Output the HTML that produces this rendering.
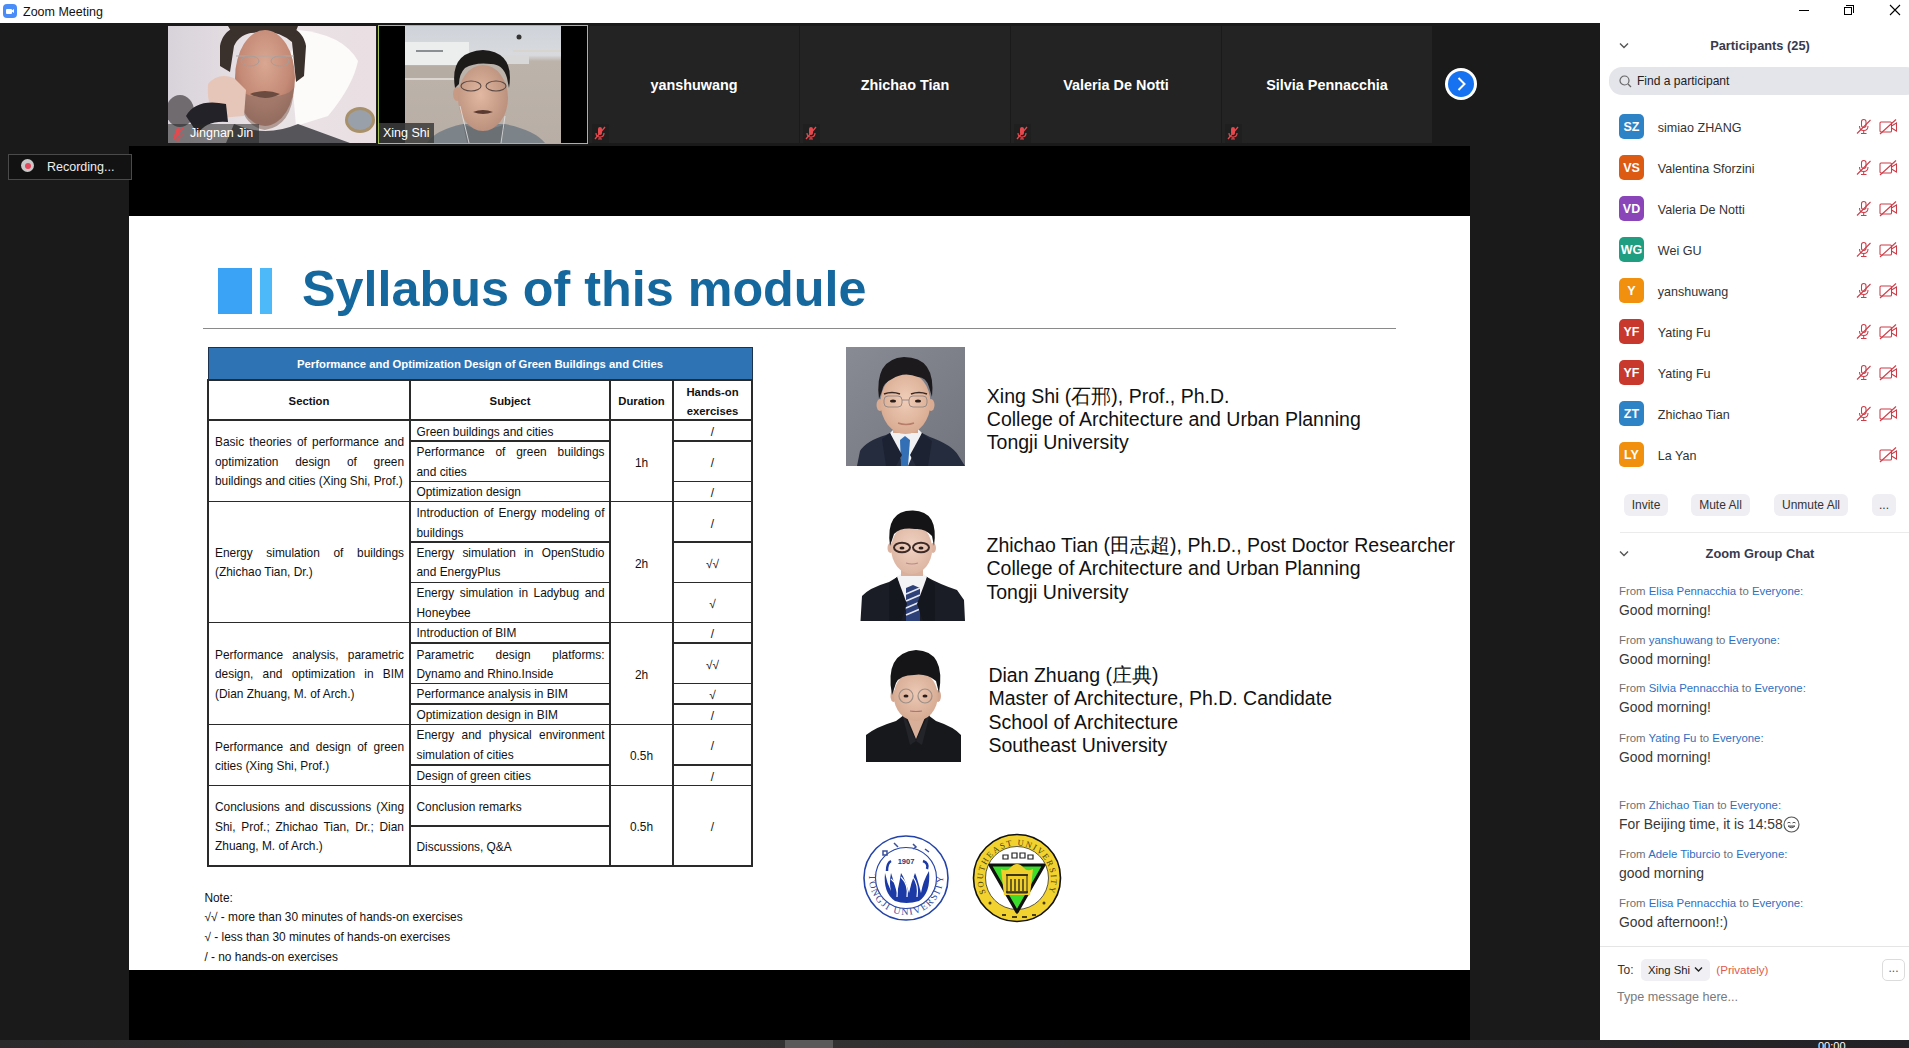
<!DOCTYPE html>
<html><head><meta charset="utf-8">
<style>
*{margin:0;padding:0;box-sizing:border-box}
html,body{width:1909px;height:1048px;overflow:hidden;background:#1a1a1a;font-family:"Liberation Sans",sans-serif}
.a{position:absolute}
#title{left:0;top:0;width:1909px;height:23px;background:#fff}
.tile{top:26px;height:117px;background:#232323}
</style></head><body>
<!-- title bar -->
<div class="a" id="title">
  <div class="a" style="left:3px;top:4px;width:14px;height:14px;border-radius:4px;background:#4b8df8"></div>
  <div class="a" style="left:6px;top:8.5px;width:6px;height:5px;background:#fff;border-radius:1px"></div>
  <div class="a" style="left:11px;top:8.5px;width:0;height:0;border-top:2.5px solid transparent;border-bottom:2.5px solid transparent;border-right:3px solid #fff"></div>
  <div class="a" style="left:23px;top:4.3px;font-size:12.5px;color:#111;line-height:16px">Zoom Meeting</div>
  <div class="a" style="left:1799px;top:10px;width:10px;height:1px;background:#000"></div>
  <div class="a" style="left:1844px;top:7px;width:8px;height:8px;border:1px solid #000;background:#fff"></div>
  <div class="a" style="left:1846px;top:5px;width:8px;height:8px;border-top:1px solid #000;border-right:1px solid #000"></div>
  <svg class="a" style="left:1889px;top:4px" width="12" height="12" viewBox="0 0 12 12"><path d="M1 1L11 11M11 1L1 11" stroke="#000" stroke-width="1.1"/></svg>
</div>
<!-- video strip -->
<div class="a" style="left:168px;top:26px;width:208px;height:117px;overflow:hidden;background:#e6dde1">
 <svg width="208" height="117" viewBox="0 0 208 117">
  <defs><linearGradient id="g1" x1="0" x2="1"><stop offset="0" stop-color="#d8d2da"/><stop offset="0.45" stop-color="#e9e3e6"/><stop offset="1" stop-color="#eadfe3"/></linearGradient>
  <radialGradient id="fc" cx="0.5" cy="0.35" r="0.6"><stop offset="0" stop-color="#d9a792"/><stop offset="0.7" stop-color="#c48a76"/><stop offset="1" stop-color="#a87262"/></radialGradient></defs>
  <rect width="208" height="117" fill="url(#g1)"/>
  <path d="M130 4 Q175 8 190 35 Q185 60 160 90 L128 100 L122 30Z" fill="#fdfafa"/>
  <ellipse cx="12" cy="85" rx="14" ry="16" fill="#6f6b6f"/>
  <ellipse cx="192" cy="94" rx="15" ry="13" fill="#a8916a"/>
  <ellipse cx="192" cy="94" rx="12" ry="10" fill="#9aa0aa"/>
  <path d="M52 20 Q56 -4 95 -4 Q134 -4 138 20 L136 50 L128 56 L124 16 Q110 4 92 6 Q72 6 66 20 L62 46 L52 40Z" fill="#3a302c"/>
  <path d="M60 0 H130 L126 10 Q96 2 66 10Z" fill="#3a302c"/>
  <ellipse cx="97" cy="52" rx="30" ry="48" fill="url(#fc)"/>
  <path d="M70 62 Q72 100 97 104 Q124 100 126 62 Q118 72 97 70 Q78 72 70 62Z" fill="#8a6d60" opacity="0.6"/>
  <path d="M82 68 Q97 62 112 68 Q97 76 82 68Z" fill="#6b4a40"/>
  <path d="M68 30 H126" stroke="#b0a8a6" stroke-width="1"/>
  <ellipse cx="82" cy="35" rx="9" ry="5" fill="none" stroke="#a89c98" stroke-width="1"/>
  <ellipse cx="112" cy="35" rx="9" ry="5" fill="none" stroke="#a89c98" stroke-width="1"/>
  <path d="M40 58 Q50 46 66 52 L78 64 L76 90 L50 92 Q38 80 40 58Z" fill="#e6c6b8"/>
  <path d="M18 90 Q28 72 58 78 L60 96 Q38 94 30 108Z" fill="#222228"/>
  <path d="M58 117 L66 98 Q97 112 130 98 L182 117Z" fill="#55555a"/>
 </svg>
 <div class="a" style="left:0;top:98px;width:91px;height:19px;background:rgba(40,40,40,0.55)"></div>
 <svg class="a" style="left:3px;top:101px" width="14" height="14" viewBox="0 0 14 14"><rect x="5" y="1" width="4" height="8" rx="2" fill="#e5484d"/><path d="M3 7Q3 11 7 11Q11 11 11 7M7 11V13M5 13H9" stroke="#e5484d" fill="none" stroke-width="1.2"/><path d="M2 13L12 1" stroke="#e5484d" stroke-width="1.3"/></svg>
 <div class="a" style="left:22px;top:99px;font-size:12.5px;color:#fff;line-height:17px">Jingnan Jin</div>
</div>
<div class="a" style="left:378px;top:25px;width:210px;height:119px;border:1px solid #a4c458;background:#000;overflow:hidden">
 <svg class="a" style="left:26px;top:0" width="156" height="117" viewBox="0 0 156 117">
  <defs><linearGradient id="wl" x1="0" x2="0" y1="0" y2="1"><stop offset="0" stop-color="#cfd3da"/><stop offset="0.25" stop-color="#d8dadd"/><stop offset="0.3" stop-color="#bcb3ab"/><stop offset="1" stop-color="#b8aea6"/></linearGradient>
  <radialGradient id="sk4" cx="0.45" cy="0.45" r="0.6"><stop offset="0" stop-color="#e2b8a2"/><stop offset="1" stop-color="#b98e7a"/></radialGradient></defs>
  <rect width="156" height="117" fill="url(#wl)"/>
  <rect x="0" y="16" width="64" height="23" fill="#eceeee"/>
  <rect x="11" y="24" width="27" height="2" fill="#8c8f92"/>
  <rect x="0" y="40" width="54" height="13" fill="#b5aca4"/>
  <rect x="0" y="52" width="54" height="2" fill="#dcd6d0"/>
  <rect x="108" y="24" width="48" height="2" fill="#d8d4d0"/>
  <rect x="96" y="30" width="28" height="8" fill="#d8d8d8"/>
  <circle cx="114" cy="11" r="2.5" fill="#333"/>
  <path d="M22 117 Q30 104 58 98 L100 98 Q130 104 140 117Z" fill="#7d8489"/>
  <path d="M58 98 Q78 108 100 98 L96 117 L62 117Z" fill="#6b7075"/>
  <ellipse cx="52" cy="68" rx="4" ry="7" fill="#c79a84"/>
  <ellipse cx="78" cy="72" rx="25" ry="33" fill="url(#sk4)"/>
  <path d="M50 62 Q44 26 78 24 Q110 26 104 62 L102 52 Q98 38 86 38 Q70 36 60 42 Q54 48 54 58Z" fill="#1d1a1a"/>
  <ellipse cx="66" cy="60" rx="10" ry="5" fill="none" stroke="#5a4a44" stroke-width="1.1"/>
  <ellipse cx="91" cy="60" rx="10" ry="5" fill="none" stroke="#5a4a44" stroke-width="1.1"/>
  <path d="M68 86 Q78 82 88 86 Q78 90 68 86Z" fill="#5a3a30"/>
  <path d="M55 80 Q60 100 64 117 M100 90 Q98 104 96 117" stroke="#e6e6e6" stroke-width="0.8" fill="none"/>
 </svg>
 <div class="a" style="left:0;top:97px;width:55px;height:20px;background:rgba(60,60,60,0.85)"></div>
 <div class="a" style="left:4px;top:99px;font-size:12.5px;color:#fff;line-height:17px">Xing Shi</div>
</div>
<div class="a tile" style="left:589px;width:210px">
 <div class="a" style="left:0;top:0;width:210px;top:50.5px;text-align:center;font-size:14.4px;font-weight:bold;color:#fff;line-height:17px">yanshuwang</div>
 <div class="a" style="left:3px;top:98px;width:17px;height:19px;background:#1f1f1f"></div>
 <svg class="a" style="left:4px;top:100px" width="14" height="14" viewBox="0 0 14 14"><rect x="5" y="1" width="4" height="8" rx="2" fill="#e5484d"/><path d="M3 7Q3 11 7 11Q11 11 11 7M7 11V13M5 13H9" stroke="#e5484d" fill="none" stroke-width="1.2"/><path d="M2 13L12 1" stroke="#e5484d" stroke-width="1.3"/></svg>
</div>
<div class="a tile" style="left:800px;width:210px">
 <div class="a" style="left:0;top:0;width:210px;top:50.5px;text-align:center;font-size:14.4px;font-weight:bold;color:#fff;line-height:17px">Zhichao Tian</div>
 <div class="a" style="left:3px;top:98px;width:17px;height:19px;background:#1f1f1f"></div>
 <svg class="a" style="left:4px;top:100px" width="14" height="14" viewBox="0 0 14 14"><rect x="5" y="1" width="4" height="8" rx="2" fill="#e5484d"/><path d="M3 7Q3 11 7 11Q11 11 11 7M7 11V13M5 13H9" stroke="#e5484d" fill="none" stroke-width="1.2"/><path d="M2 13L12 1" stroke="#e5484d" stroke-width="1.3"/></svg>
</div>
<div class="a tile" style="left:1011px;width:210px">
 <div class="a" style="left:0;top:0;width:210px;top:50.5px;text-align:center;font-size:14.4px;font-weight:bold;color:#fff;line-height:17px">Valeria De Notti</div>
 <div class="a" style="left:3px;top:98px;width:17px;height:19px;background:#1f1f1f"></div>
 <svg class="a" style="left:4px;top:100px" width="14" height="14" viewBox="0 0 14 14"><rect x="5" y="1" width="4" height="8" rx="2" fill="#e5484d"/><path d="M3 7Q3 11 7 11Q11 11 11 7M7 11V13M5 13H9" stroke="#e5484d" fill="none" stroke-width="1.2"/><path d="M2 13L12 1" stroke="#e5484d" stroke-width="1.3"/></svg>
</div>
<div class="a tile" style="left:1222px;width:210px">
 <div class="a" style="left:0;top:0;width:210px;top:50.5px;text-align:center;font-size:14.4px;font-weight:bold;color:#fff;line-height:17px">Silvia Pennacchia</div>
 <div class="a" style="left:3px;top:98px;width:17px;height:19px;background:#1f1f1f"></div>
 <svg class="a" style="left:4px;top:100px" width="14" height="14" viewBox="0 0 14 14"><rect x="5" y="1" width="4" height="8" rx="2" fill="#e5484d"/><path d="M3 7Q3 11 7 11Q11 11 11 7M7 11V13M5 13H9" stroke="#e5484d" fill="none" stroke-width="1.2"/><path d="M2 13L12 1" stroke="#e5484d" stroke-width="1.3"/></svg>
</div>
<div class="a" style="left:1445px;top:68px;width:32px;height:32px;border-radius:50%;background:#fff"></div>
<div class="a" style="left:1448px;top:71px;width:26px;height:26px;border-radius:50%;background:#1672f0"></div>
<svg class="a" style="left:1448px;top:71px" width="27" height="27" viewBox="0 0 27 27"><path d="M10.5 7L16.5 13L10.5 19" stroke="#fff" stroke-width="2" fill="none"/></svg>
<div class="a" style="left:129px;top:146px;width:1341px;height:894px;background:#000;"></div>
<div class="a" style="left:129px;top:216px;width:1341px;height:754px;background:#fff;"></div>
<div class="a" style="left:218px;top:268px;width:34px;height:46px;background:#3aa3f6;"></div>
<div class="a" style="left:260px;top:268px;width:12px;height:46px;background:#4db9f8;"></div>
<div class="a" style="left:302.0px;top:258.9px;font-size:50.3px;line-height:60px;color:#15689e;white-space:nowrap;font-weight:bold;">Syllabus of this module</div>
<div class="a" style="left:203px;top:327.8px;width:1193px;height:1.5px;background:#8a8a8a;"></div>
<div class="a" style="left:208px;top:347px;width:545px;height:33px;background:#2e74b5;border:1.3px solid #1b3350"></div>
<div class="a" style="left:207.25px;top:379px;width:1.5px;height:488px;background:#2a2a2a;"></div>
<div class="a" style="left:751.25px;top:379px;width:1.5px;height:488px;background:#2a2a2a;"></div>
<div class="a" style="left:409.25px;top:379px;width:1.5px;height:488px;background:#2a2a2a;"></div>
<div class="a" style="left:609.25px;top:379px;width:1.5px;height:488px;background:#2a2a2a;"></div>
<div class="a" style="left:672.25px;top:379px;width:1.5px;height:488px;background:#2a2a2a;"></div>
<div class="a" style="left:207px;top:419.25px;width:546px;height:1.5px;background:#2a2a2a;"></div>
<div class="a" style="left:207px;top:500.85px;width:546px;height:1.5px;background:#2a2a2a;"></div>
<div class="a" style="left:207px;top:621.85px;width:546px;height:1.5px;background:#2a2a2a;"></div>
<div class="a" style="left:207px;top:723.65px;width:546px;height:1.5px;background:#2a2a2a;"></div>
<div class="a" style="left:207px;top:784.65px;width:546px;height:1.5px;background:#2a2a2a;"></div>
<div class="a" style="left:207px;top:865.25px;width:546px;height:1.5px;background:#2a2a2a;"></div>
<div class="a" style="left:207px;top:379.25px;width:546px;height:1.5px;background:#2a2a2a;"></div>
<div class="a" style="left:409px;top:440.25px;width:202px;height:1.5px;background:#2a2a2a;"></div>
<div class="a" style="left:672px;top:440.25px;width:81px;height:1.5px;background:#2a2a2a;"></div>
<div class="a" style="left:409px;top:480.65px;width:202px;height:1.5px;background:#2a2a2a;"></div>
<div class="a" style="left:672px;top:480.65px;width:81px;height:1.5px;background:#2a2a2a;"></div>
<div class="a" style="left:409px;top:541.05px;width:202px;height:1.5px;background:#2a2a2a;"></div>
<div class="a" style="left:672px;top:541.05px;width:81px;height:1.5px;background:#2a2a2a;"></div>
<div class="a" style="left:409px;top:581.55px;width:202px;height:1.5px;background:#2a2a2a;"></div>
<div class="a" style="left:672px;top:581.55px;width:81px;height:1.5px;background:#2a2a2a;"></div>
<div class="a" style="left:409px;top:642.35px;width:202px;height:1.5px;background:#2a2a2a;"></div>
<div class="a" style="left:672px;top:642.35px;width:81px;height:1.5px;background:#2a2a2a;"></div>
<div class="a" style="left:409px;top:682.55px;width:202px;height:1.5px;background:#2a2a2a;"></div>
<div class="a" style="left:672px;top:682.55px;width:81px;height:1.5px;background:#2a2a2a;"></div>
<div class="a" style="left:409px;top:703.15px;width:202px;height:1.5px;background:#2a2a2a;"></div>
<div class="a" style="left:672px;top:703.15px;width:81px;height:1.5px;background:#2a2a2a;"></div>
<div class="a" style="left:409px;top:764.15px;width:202px;height:1.5px;background:#2a2a2a;"></div>
<div class="a" style="left:672px;top:764.15px;width:81px;height:1.5px;background:#2a2a2a;"></div>
<div class="a" style="left:409px;top:825.45px;width:202px;height:1.5px;background:#2a2a2a;"></div>
<div class="a" style="left:208.0px;top:355.7px;font-size:11.3px;line-height:16px;color:#fff;white-space:nowrap;font-weight:bold;width:544px;text-align:center;">Performance and Optimization Design of Green Buildings and Cities</div>
<div class="a" style="left:208.0px;top:393.1px;font-size:11.3px;line-height:16px;color:#111;white-space:nowrap;font-weight:bold;width:202px;text-align:center;">Section</div>
<div class="a" style="left:410.0px;top:393.1px;font-size:11.3px;line-height:16px;color:#111;white-space:nowrap;font-weight:bold;width:200px;text-align:center;">Subject</div>
<div class="a" style="left:610.0px;top:393.1px;font-size:11.3px;line-height:16px;color:#111;white-space:nowrap;font-weight:bold;width:63px;text-align:center;">Duration</div>
<div class="a" style="left:673.0px;top:383.8px;font-size:11.3px;line-height:16px;color:#111;white-space:nowrap;font-weight:bold;width:79px;text-align:center;">Hands-on</div>
<div class="a" style="left:673.0px;top:402.9px;font-size:11.3px;line-height:16px;color:#111;white-space:nowrap;font-weight:bold;width:79px;text-align:center;">exercises</div>
<div class="a" style="left:215px;top:433.0px;width:189px;font-size:11.9px;line-height:19.5px;color:#111;text-align:justify;text-align-last:justify;white-space:nowrap;">Basic theories of performance and</div>
<div class="a" style="left:215px;top:452.5px;width:189px;font-size:11.9px;line-height:19.5px;color:#111;text-align:justify;text-align-last:justify;white-space:nowrap;">optimization design of green</div>
<div class="a" style="left:215.0px;top:472.0px;font-size:11.9px;line-height:19.5px;color:#111;white-space:nowrap;">buildings and cities (Xing Shi, Prof.)</div>
<div class="a" style="left:215px;top:543.9px;width:189px;font-size:11.9px;line-height:19.5px;color:#111;text-align:justify;text-align-last:justify;white-space:nowrap;">Energy simulation of buildings</div>
<div class="a" style="left:215.0px;top:563.4px;font-size:11.9px;line-height:19.5px;color:#111;white-space:nowrap;">(Zhichao Tian, Dr.)</div>
<div class="a" style="left:215px;top:645.8px;width:189px;font-size:11.9px;line-height:19.5px;color:#111;text-align:justify;text-align-last:justify;white-space:nowrap;">Performance analysis, parametric</div>
<div class="a" style="left:215px;top:665.3px;width:189px;font-size:11.9px;line-height:19.5px;color:#111;text-align:justify;text-align-last:justify;white-space:nowrap;">design, and optimization in BIM</div>
<div class="a" style="left:215.0px;top:684.8px;font-size:11.9px;line-height:19.5px;color:#111;white-space:nowrap;">(Dian Zhuang, M. of Arch.)</div>
<div class="a" style="left:215px;top:737.6px;width:189px;font-size:11.9px;line-height:19.5px;color:#111;text-align:justify;text-align-last:justify;white-space:nowrap;">Performance and design of green</div>
<div class="a" style="left:215.0px;top:757.1px;font-size:11.9px;line-height:19.5px;color:#111;white-space:nowrap;">cities (Xing Shi, Prof.)</div>
<div class="a" style="left:215px;top:798.4px;width:189px;font-size:11.9px;line-height:19.5px;color:#111;text-align:justify;text-align-last:justify;white-space:nowrap;">Conclusions and discussions (Xing</div>
<div class="a" style="left:215px;top:817.9px;width:189px;font-size:11.9px;line-height:19.5px;color:#111;text-align:justify;text-align-last:justify;white-space:nowrap;">Shi, Prof.; Zhichao Tian, Dr.; Dian</div>
<div class="a" style="left:215.0px;top:837.4px;font-size:11.9px;line-height:19.5px;color:#111;white-space:nowrap;">Zhuang, M. of Arch.)</div>
<div class="a" style="left:416.5px;top:422.6px;font-size:11.9px;line-height:19.5px;color:#111;white-space:nowrap;">Green buildings and cities</div>
<div class="a" style="left:416.5px;top:443.2px;width:188px;font-size:11.9px;line-height:19.5px;color:#111;text-align:justify;text-align-last:justify;white-space:nowrap;">Performance of green buildings</div>
<div class="a" style="left:416.5px;top:462.7px;font-size:11.9px;line-height:19.5px;color:#111;white-space:nowrap;">and cities</div>
<div class="a" style="left:416.5px;top:482.9px;font-size:11.9px;line-height:19.5px;color:#111;white-space:nowrap;">Optimization design</div>
<div class="a" style="left:416.5px;top:504.0px;width:188px;font-size:11.9px;line-height:19.5px;color:#111;text-align:justify;text-align-last:justify;white-space:nowrap;">Introduction of Energy modeling of</div>
<div class="a" style="left:416.5px;top:523.5px;font-size:11.9px;line-height:19.5px;color:#111;white-space:nowrap;">buildings</div>
<div class="a" style="left:416.5px;top:543.9px;width:188px;font-size:11.9px;line-height:19.5px;color:#111;text-align:justify;text-align-last:justify;white-space:nowrap;">Energy simulation in OpenStudio</div>
<div class="a" style="left:416.5px;top:563.4px;font-size:11.9px;line-height:19.5px;color:#111;white-space:nowrap;">and EnergyPlus</div>
<div class="a" style="left:416.5px;top:584.1px;width:188px;font-size:11.9px;line-height:19.5px;color:#111;text-align:justify;text-align-last:justify;white-space:nowrap;">Energy simulation in Ladybug and</div>
<div class="a" style="left:416.5px;top:603.6px;font-size:11.9px;line-height:19.5px;color:#111;white-space:nowrap;">Honeybee</div>
<div class="a" style="left:416.5px;top:624.4px;font-size:11.9px;line-height:19.5px;color:#111;white-space:nowrap;">Introduction of BIM</div>
<div class="a" style="left:416.5px;top:645.8px;width:188px;font-size:11.9px;line-height:19.5px;color:#111;text-align:justify;text-align-last:justify;white-space:nowrap;">Parametric design platforms:</div>
<div class="a" style="left:416.5px;top:665.3px;font-size:11.9px;line-height:19.5px;color:#111;white-space:nowrap;">Dynamo and Rhino.Inside</div>
<div class="a" style="left:416.5px;top:685.4px;font-size:11.9px;line-height:19.5px;color:#111;white-space:nowrap;">Performance analysis in BIM</div>
<div class="a" style="left:416.5px;top:705.9px;font-size:11.9px;line-height:19.5px;color:#111;white-space:nowrap;">Optimization design in BIM</div>
<div class="a" style="left:416.5px;top:726.4px;width:188px;font-size:11.9px;line-height:19.5px;color:#111;text-align:justify;text-align-last:justify;white-space:nowrap;">Energy and physical environment</div>
<div class="a" style="left:416.5px;top:745.9px;font-size:11.9px;line-height:19.5px;color:#111;white-space:nowrap;">simulation of cities</div>
<div class="a" style="left:416.5px;top:766.9px;font-size:11.9px;line-height:19.5px;color:#111;white-space:nowrap;">Design of green cities</div>
<div class="a" style="left:416.5px;top:797.7px;font-size:11.9px;line-height:19.5px;color:#111;white-space:nowrap;">Conclusion remarks</div>
<div class="a" style="left:416.5px;top:837.9px;font-size:11.9px;line-height:19.5px;color:#111;white-space:nowrap;">Discussions, Q&amp;A</div>
<div class="a" style="left:610.0px;top:454.7px;font-size:11.9px;line-height:16px;color:#111;white-space:nowrap;width:63px;text-align:center;">1h</div>
<div class="a" style="left:610.0px;top:555.7px;font-size:11.9px;line-height:16px;color:#111;white-space:nowrap;width:63px;text-align:center;">2h</div>
<div class="a" style="left:610.0px;top:666.7px;font-size:11.9px;line-height:16px;color:#111;white-space:nowrap;width:63px;text-align:center;">2h</div>
<div class="a" style="left:610.0px;top:748.2px;font-size:11.9px;line-height:16px;color:#111;white-space:nowrap;width:63px;text-align:center;">0.5h</div>
<div class="a" style="left:610.0px;top:819.2px;font-size:11.9px;line-height:16px;color:#111;white-space:nowrap;width:63px;text-align:center;">0.5h</div>
<div class="a" style="left:673.0px;top:424.4px;font-size:11.9px;line-height:16px;color:#111;white-space:nowrap;width:79px;text-align:center;">/</div>
<div class="a" style="left:673.0px;top:454.7px;font-size:11.9px;line-height:16px;color:#111;white-space:nowrap;width:79px;text-align:center;">/</div>
<div class="a" style="left:673.0px;top:484.7px;font-size:11.9px;line-height:16px;color:#111;white-space:nowrap;width:79px;text-align:center;">/</div>
<div class="a" style="left:673.0px;top:515.7px;font-size:11.9px;line-height:16px;color:#111;white-space:nowrap;width:79px;text-align:center;">/</div>
<div class="a" style="left:673.0px;top:555.7px;font-size:11.9px;line-height:16px;color:#111;white-space:nowrap;width:79px;text-align:center;">√√</div>
<div class="a" style="left:673.0px;top:595.7px;font-size:11.9px;line-height:16px;color:#111;white-space:nowrap;width:79px;text-align:center;">√</div>
<div class="a" style="left:673.0px;top:626.2px;font-size:11.9px;line-height:16px;color:#111;white-space:nowrap;width:79px;text-align:center;">/</div>
<div class="a" style="left:673.0px;top:656.7px;font-size:11.9px;line-height:16px;color:#111;white-space:nowrap;width:79px;text-align:center;">√√</div>
<div class="a" style="left:673.0px;top:687.2px;font-size:11.9px;line-height:16px;color:#111;white-space:nowrap;width:79px;text-align:center;">√</div>
<div class="a" style="left:673.0px;top:707.7px;font-size:11.9px;line-height:16px;color:#111;white-space:nowrap;width:79px;text-align:center;">/</div>
<div class="a" style="left:673.0px;top:738.2px;font-size:11.9px;line-height:16px;color:#111;white-space:nowrap;width:79px;text-align:center;">/</div>
<div class="a" style="left:673.0px;top:768.7px;font-size:11.9px;line-height:16px;color:#111;white-space:nowrap;width:79px;text-align:center;">/</div>
<div class="a" style="left:673.0px;top:819.2px;font-size:11.9px;line-height:16px;color:#111;white-space:nowrap;width:79px;text-align:center;">/</div>
<div class="a" style="left:204.4px;top:889.6px;font-size:11.9px;line-height:16px;color:#111;white-space:nowrap;">Note:</div>
<div class="a" style="left:204.4px;top:909.4px;font-size:11.9px;line-height:16px;color:#111;white-space:nowrap;">√√ - more than 30 minutes of hands-on exercises</div>
<div class="a" style="left:204.4px;top:928.6px;font-size:11.9px;line-height:16px;color:#111;white-space:nowrap;">√ - less than 30 minutes of hands-on exercises</div>
<div class="a" style="left:204.4px;top:948.5px;font-size:11.9px;line-height:16px;color:#111;white-space:nowrap;">/ - no hands-on exercises</div>
<div class="a" style="left:986.8px;top:384.5px;font-size:19.5px;line-height:23px;color:#111;white-space:nowrap;">Xing Shi (石邢), Prof., Ph.D.</div>
<div class="a" style="left:986.8px;top:407.8px;font-size:19.5px;line-height:23px;color:#111;white-space:nowrap;">College of Architecture and Urban Planning</div>
<div class="a" style="left:986.8px;top:431.1px;font-size:19.5px;line-height:23px;color:#111;white-space:nowrap;">Tongji University</div>
<div class="a" style="left:986.5px;top:534.0px;font-size:19.5px;line-height:23px;color:#111;white-space:nowrap;">Zhichao Tian (田志超), Ph.D., Post Doctor Researcher</div>
<div class="a" style="left:986.5px;top:557.3px;font-size:19.5px;line-height:23px;color:#111;white-space:nowrap;">College of Architecture and Urban Planning</div>
<div class="a" style="left:986.5px;top:580.6px;font-size:19.5px;line-height:23px;color:#111;white-space:nowrap;">Tongji University</div>
<div class="a" style="left:988.4px;top:664.0px;font-size:19.5px;line-height:23px;color:#111;white-space:nowrap;">Dian Zhuang (庄典)</div>
<div class="a" style="left:988.4px;top:687.3px;font-size:19.5px;line-height:23px;color:#111;white-space:nowrap;">Master of Architecture, Ph.D. Candidate</div>
<div class="a" style="left:988.4px;top:710.6px;font-size:19.5px;line-height:23px;color:#111;white-space:nowrap;">School of Architecture</div>
<div class="a" style="left:988.4px;top:733.9px;font-size:19.5px;line-height:23px;color:#111;white-space:nowrap;">Southeast University</div>
<svg class="a" style="left:846px;top:347px" width="119" height="119" viewBox="0 0 119 119">
 <defs><linearGradient id="pg1" x1="0" x2="1" y1="0" y2="1"><stop offset="0" stop-color="#888b94"/><stop offset="1" stop-color="#72757e"/></linearGradient>
 <radialGradient id="sk1" cx="0.5" cy="0.45" r="0.6"><stop offset="0" stop-color="#f0cdb8"/><stop offset="1" stop-color="#d6a88e"/></radialGradient></defs>
 <rect width="119" height="119" fill="url(#pg1)"/>
 <path d="M11 119 L14 104 Q20 94 40 88 L48 84 L72 84 L84 90 Q106 98 112 108 L119 119Z" fill="#252c3e"/>
 <path d="M44 86 L58 119 L62 119 L76 86 L70 80 L50 80Z" fill="#f1f1f3"/>
 <path d="M54 93 L59 89 L64 93 L62 119 L55 119Z" fill="#336fb4"/>
 <path d="M44 86 L56 108 L50 119 L40 119 L36 92Z" fill="#1c2232"/>
 <path d="M76 86 L64 108 L70 119 L82 119 L86 94Z" fill="#1c2232"/>
 <rect x="47" y="70" width="25" height="16" fill="#d4a58b"/>
 <ellipse cx="34" cy="58" rx="3.5" ry="6" fill="#d9ab92"/>
 <ellipse cx="85" cy="58" rx="3.5" ry="6" fill="#d9ab92"/>
 <ellipse cx="59.5" cy="56" rx="25" ry="31" fill="url(#sk1)"/>
 <path d="M33 52 Q28 12 58 10 Q90 10 86 50 L83 40 Q80 30 72 30 Q58 24 46 32 Q37 36 36 44Z" fill="#1c1a1c"/>
 <path d="M38 47 Q46 44 54 47 M65 47 Q73 44 81 47" stroke="#3a2a26" stroke-width="1.6" fill="none"/>
 <ellipse cx="47" cy="54" rx="3" ry="1.6" fill="#2a1e1c"/><ellipse cx="72" cy="54" rx="3" ry="1.6" fill="#2a1e1c"/>
 <rect x="38" y="49" width="18" height="11" rx="4" fill="none" stroke="#9a8a86" stroke-width="1"/>
 <rect x="63" y="49" width="18" height="11" rx="4" fill="none" stroke="#9a8a86" stroke-width="1"/>
 <path d="M56 53 H63" stroke="#9a8a86" stroke-width="1"/>
 <path d="M52 76 Q60 79 68 76" stroke="#b77c6a" stroke-width="1.4" fill="none"/>
</svg>
<svg class="a" style="left:859px;top:508px" width="106" height="113" viewBox="0 0 106 113">
 <defs><radialGradient id="sk2" cx="0.5" cy="0.45" r="0.6"><stop offset="0" stop-color="#f0d2c2"/><stop offset="1" stop-color="#dcb3a0"/></radialGradient></defs>
 <path d="M1.5 113 L3 88 Q10 80 30 74 L40 68 L66 68 Q80 76 98 82 L105 92 L106 113Z" fill="#1b1d26"/>
 <path d="M38 69 L50 113 L58 113 L68 69 L62 64 L44 64Z" fill="#f3f3f6"/>
 <path d="M47 80 L54 77 L61 80 L61 113 L47 113Z" fill="#2d4178"/>
 <path d="M47 86 L61 80 M47 93 L61 87 M47 100 L61 94 M47 107 L61 101" stroke="#e6e9f2" stroke-width="1.6"/>
 <path d="M38 69 L48 96 L42 113 L30 113 L30 76Z" fill="#15171e"/>
 <path d="M68 69 L58 96 L64 113 L76 113 L76 76Z" fill="#15171e"/>
 <rect x="42" y="54" width="22" height="14" fill="#d8b09c"/>
 <ellipse cx="31.5" cy="40" rx="3" ry="5" fill="#dcb3a0"/>
 <ellipse cx="74" cy="40" rx="3" ry="5" fill="#dcb3a0"/>
 <ellipse cx="52.7" cy="41" rx="20.5" ry="25" fill="url(#sk2)"/>
 <path d="M31 38 Q26 2 54 2.5 Q80 3 75 38 L73 28 Q66 20 56 21 Q42 19 35 26Z" fill="#141315"/>
 <ellipse cx="43" cy="39.5" rx="8" ry="4.8" fill="none" stroke="#3b2a26" stroke-width="2"/>
 <ellipse cx="62" cy="39.5" rx="8" ry="4.8" fill="none" stroke="#3b2a26" stroke-width="2"/>
 <ellipse cx="43" cy="40" rx="2.5" ry="1.5" fill="#2a1e1c"/><ellipse cx="62" cy="40" rx="2.5" ry="1.5" fill="#2a1e1c"/>
 <path d="M47 55 Q53 57 59 55" stroke="#b88" stroke-width="1.2" fill="none"/>
</svg>
<svg class="a" style="left:866px;top:649px" width="95" height="113" viewBox="0 0 95 113">
 <defs><radialGradient id="sk3" cx="0.5" cy="0.45" r="0.6"><stop offset="0" stop-color="#ecc8b4"/><stop offset="1" stop-color="#d4a890"/></radialGradient></defs>
 <path d="M0 113 L0 86 Q10 78 30 72 L38 66 L62 66 L70 72 Q88 78 95 86 L95 113Z" fill="#17181b"/>
 <path d="M40 66 L50 90 L60 66Z" fill="#d8b09a"/>
 <path d="M36 64 L44 96 L50 92 L40 70Z M64 64 L56 96 L50 92 L60 70Z" fill="#22242a"/>
 <rect x="38" y="54" width="24" height="14" fill="#d0a48c"/>
 <ellipse cx="27.5" cy="47" rx="3" ry="6" fill="#d4a890"/>
 <ellipse cx="72" cy="47" rx="3" ry="6" fill="#d4a890"/>
 <ellipse cx="49.8" cy="47" rx="22" ry="25" fill="url(#sk3)"/>
 <path d="M26 46 Q18 4 50 1 Q80 2 73 44 L70 32 Q60 24 48 26 Q34 26 30 34Z" fill="#151416"/>
 <circle cx="40" cy="47" r="7" fill="none" stroke="#9b8f88" stroke-width="1.2"/>
 <circle cx="59" cy="47" r="7" fill="none" stroke="#9b8f88" stroke-width="1.2"/>
 <ellipse cx="40" cy="47" rx="2.5" ry="1.5" fill="#2a1e1c"/><ellipse cx="59" cy="47" rx="2.5" ry="1.5" fill="#2a1e1c"/>
 <path d="M44 62 Q50 63 56 62" stroke="#a77" stroke-width="1.2" fill="none"/>
</svg>
<svg class="a" style="left:861px;top:833px" width="90" height="90" viewBox="0 0 90 90">
 <defs><path id="tjb" d="M8 45 A37 37 0 0 0 82 45"/></defs>
 <circle cx="45" cy="45" r="42" fill="#fff" stroke="#2443a8" stroke-width="1.6"/>
 <circle cx="45" cy="45" r="30.5" fill="none" stroke="#2443a8" stroke-width="1.1"/>
 <text font-family="Liberation Serif" font-size="10" fill="#3a4f9c" letter-spacing="1.5"><textPath href="#tjb" startOffset="50%" text-anchor="middle">TONGJI UNIVERSITY</textPath></text>
 <path d="M22 18 h4 v4 h-4z M33 10 l4 4 M52 11 l3 3 l-3 2 M64 16 l4 3" stroke="#3a4f9c" stroke-width="1.5" fill="none"/>
 <text x="45" y="31" font-family="Liberation Sans" font-size="7.5" font-weight="bold" text-anchor="middle" fill="#2a3a7a">1907</text>
 <path d="M24 40 Q22 60 34 68 Q45 72 58 68 Q70 60 68 38 Q62 48 60 60 Q56 44 54 40 Q50 50 48 60 Q44 46 40 40 Q38 52 36 60 Q32 46 30 40 Q28 50 30 58 Q26 50 24 40Z" fill="#1c3aa6"/>
 <path d="M26 38 Q26 30 30 28 M66 36 Q68 30 62 28" stroke="#1c3aa6" stroke-width="2.5" fill="none"/>
 <path d="M30 46 Q38 52 36 64 M40 44 Q48 52 46 64 M52 44 Q58 52 56 64" stroke="#fff" stroke-width="1.2" fill="none"/>
</svg>
<svg class="a" style="left:972px;top:833px" width="90" height="90" viewBox="0 0 90 90">
 <defs><path id="seb" d="M13 58 A34 34 0 1 1 77 58"/></defs>
 <circle cx="45" cy="45" r="43.5" fill="#f2d22e" stroke="#111" stroke-width="1.6"/>
 <circle cx="45" cy="45" r="31.5" fill="#fff" stroke="#333" stroke-width="0.8"/>
 <text font-family="Liberation Serif" font-size="8.5" fill="#4a3e10" letter-spacing="1.6"><textPath href="#seb" startOffset="50%" text-anchor="middle">SOUTHEAST UNIVERSITY</textPath></text>
 <path d="M30 82 h4 M40 84 h5 M50 84 h5 M60 82 h4" stroke="#4a3e10" stroke-width="2"/>
 <circle cx="18" cy="70" r="1.5" fill="#4a3e10"/><circle cx="72" cy="70" r="1.5" fill="#4a3e10"/>
 <path d="M18 32 L72 32 L45 79Z" fill="#3bdc2c" stroke="#111" stroke-width="3.2" stroke-linejoin="round"/>
 <path d="M29 36 Q35 39 38 35 Q45 27 52 35 Q55 39 61 36 L58 62 L32 62Z" fill="#f0cf2a"/>
 <rect x="35" y="42" width="20" height="18" fill="#f0cf2a" stroke="#222" stroke-width="1"/>
 <path d="M34 42 H56 M39 46 V58 M43 46 V58 M47 46 V58 M51 46 V58 M34 59 H56" stroke="#222" stroke-width="1.3"/>
 <path d="M31 22 h5 v4 h-5z M40 20 h5 v5 h-5z M48 20 h5 v5 h-5z M56 22 h5 v4 h-5z" fill="none" stroke="#222" stroke-width="1.2"/>
</svg>
<!-- recording -->
<div class="a" style="left:8px;top:154px;width:124px;height:26px;border:1px solid #4a4a4a;background:#121212">
 <div class="a" style="left:12px;top:4px;width:13px;height:13px;border-radius:50%;background:#c9c9c9"></div>
 <div class="a" style="left:15.5px;top:7.5px;width:6px;height:6px;border-radius:50%;background:#e5475c"></div>
 <div class="a" style="left:38px;top:4px;font-size:12.5px;color:#eee;line-height:16px">Recording...</div>
</div>

<div class="a" style="left:1600px;top:23px;width:309px;height:1017px;background:#fff;"></div>
<div class="a" style="left:0px;top:1040px;width:1909px;height:8px;background:linear-gradient(90deg,#2a2a2c,#353535 30%,#2d2d2f 60%,#222226);"></div>
<div class="a" style="left:785px;top:1040px;width:48px;height:8px;background:#5a5a5a;"></div>
<div class="a" style="left:1818.0px;top:1039.2px;font-size:11px;line-height:14px;color:#fff;white-space:nowrap;">00:00</div>
<svg class="a" style="left:1619px;top:42px" width="10" height="7" viewBox="0 0 10 7"><path d="M1 1.5L5 5.5L9 1.5" stroke="#555" stroke-width="1.4" fill="none"/></svg>
<div class="a" style="left:1600.0px;top:37.6px;font-size:12.8px;line-height:16px;color:#39394d;white-space:nowrap;font-weight:bold;width:320px;text-align:center;">Participants (25)</div>
<div class="a" style="left:1609px;top:67px;width:310px;height:28px;background:#e4e4eb;border-radius:13px"></div>
<svg class="a" style="left:1619px;top:75px" width="13" height="13" viewBox="0 0 13 13"><circle cx="5.5" cy="5.5" r="4.5" stroke="#666" stroke-width="1.2" fill="none"/><path d="M9 9L12 12" stroke="#666" stroke-width="1.3"/></svg>
<div class="a" style="left:1637.0px;top:72.8px;font-size:12.05px;line-height:16px;color:#222;white-space:nowrap;">Find a participant</div>
<div class="a" style="left:1619px;top:113.6px;width:25px;height:25px;background:#2e83c6;border-radius:5px"></div>
<div class="a" style="left:1619.0px;top:119.1px;font-size:12.5px;line-height:16px;color:#fff;white-space:nowrap;font-weight:bold;width:25px;text-align:center;">SZ</div>
<div class="a" style="left:1657.8px;top:119.7px;font-size:12.55px;line-height:16px;color:#333;white-space:nowrap;">simiao ZHANG</div>
<svg class="a" style="left:1855px;top:118px" width="17" height="17" viewBox="0 0 17 17"><rect x="6.5" y="1.5" width="4.5" height="8" rx="2.2" fill="none" stroke="#cc3d48" stroke-width="1.05"/><path d="M4.5 8Q4.5 12.5 8.7 12.5Q13 12.5 13 8M8.7 12.5V15M6 15.5H11.5" stroke="#cc3d48" fill="none" stroke-width="1.05"/><path d="M2 15.5L15.5 2" stroke="#cc3d48" stroke-width="1.1"/></svg>
<svg class="a" style="left:1879px;top:118px" width="19" height="17" viewBox="0 0 19 17"><rect x="1" y="4" width="11.5" height="10" rx="1" fill="none" stroke="#cc3d48" stroke-width="1.05"/><path d="M12.5 8L17.5 5V13L12.5 10" stroke="#cc3d48" fill="none" stroke-width="1.05"/><path d="M1 16L17 1.5" stroke="#cc3d48" stroke-width="1.1"/></svg>
<div class="a" style="left:1619px;top:154.6px;width:25px;height:25px;background:#dd5a12;border-radius:5px"></div>
<div class="a" style="left:1619.0px;top:160.1px;font-size:12.5px;line-height:16px;color:#fff;white-space:nowrap;font-weight:bold;width:25px;text-align:center;">VS</div>
<div class="a" style="left:1657.8px;top:160.7px;font-size:12.55px;line-height:16px;color:#333;white-space:nowrap;">Valentina Sforzini</div>
<svg class="a" style="left:1855px;top:159px" width="17" height="17" viewBox="0 0 17 17"><rect x="6.5" y="1.5" width="4.5" height="8" rx="2.2" fill="none" stroke="#cc3d48" stroke-width="1.05"/><path d="M4.5 8Q4.5 12.5 8.7 12.5Q13 12.5 13 8M8.7 12.5V15M6 15.5H11.5" stroke="#cc3d48" fill="none" stroke-width="1.05"/><path d="M2 15.5L15.5 2" stroke="#cc3d48" stroke-width="1.1"/></svg>
<svg class="a" style="left:1879px;top:159px" width="19" height="17" viewBox="0 0 19 17"><rect x="1" y="4" width="11.5" height="10" rx="1" fill="none" stroke="#cc3d48" stroke-width="1.05"/><path d="M12.5 8L17.5 5V13L12.5 10" stroke="#cc3d48" fill="none" stroke-width="1.05"/><path d="M1 16L17 1.5" stroke="#cc3d48" stroke-width="1.1"/></svg>
<div class="a" style="left:1619px;top:195.6px;width:25px;height:25px;background:#8a45b8;border-radius:5px"></div>
<div class="a" style="left:1619.0px;top:201.1px;font-size:12.5px;line-height:16px;color:#fff;white-space:nowrap;font-weight:bold;width:25px;text-align:center;">VD</div>
<div class="a" style="left:1657.8px;top:201.7px;font-size:12.55px;line-height:16px;color:#333;white-space:nowrap;">Valeria De Notti</div>
<svg class="a" style="left:1855px;top:200px" width="17" height="17" viewBox="0 0 17 17"><rect x="6.5" y="1.5" width="4.5" height="8" rx="2.2" fill="none" stroke="#cc3d48" stroke-width="1.05"/><path d="M4.5 8Q4.5 12.5 8.7 12.5Q13 12.5 13 8M8.7 12.5V15M6 15.5H11.5" stroke="#cc3d48" fill="none" stroke-width="1.05"/><path d="M2 15.5L15.5 2" stroke="#cc3d48" stroke-width="1.1"/></svg>
<svg class="a" style="left:1879px;top:200px" width="19" height="17" viewBox="0 0 19 17"><rect x="1" y="4" width="11.5" height="10" rx="1" fill="none" stroke="#cc3d48" stroke-width="1.05"/><path d="M12.5 8L17.5 5V13L12.5 10" stroke="#cc3d48" fill="none" stroke-width="1.05"/><path d="M1 16L17 1.5" stroke="#cc3d48" stroke-width="1.1"/></svg>
<div class="a" style="left:1619px;top:236.6px;width:25px;height:25px;background:#1f9e82;border-radius:5px"></div>
<div class="a" style="left:1619.0px;top:242.1px;font-size:12.5px;line-height:16px;color:#fff;white-space:nowrap;font-weight:bold;width:25px;text-align:center;">WG</div>
<div class="a" style="left:1657.8px;top:242.7px;font-size:12.55px;line-height:16px;color:#333;white-space:nowrap;">Wei GU</div>
<svg class="a" style="left:1855px;top:241px" width="17" height="17" viewBox="0 0 17 17"><rect x="6.5" y="1.5" width="4.5" height="8" rx="2.2" fill="none" stroke="#cc3d48" stroke-width="1.05"/><path d="M4.5 8Q4.5 12.5 8.7 12.5Q13 12.5 13 8M8.7 12.5V15M6 15.5H11.5" stroke="#cc3d48" fill="none" stroke-width="1.05"/><path d="M2 15.5L15.5 2" stroke="#cc3d48" stroke-width="1.1"/></svg>
<svg class="a" style="left:1879px;top:241px" width="19" height="17" viewBox="0 0 19 17"><rect x="1" y="4" width="11.5" height="10" rx="1" fill="none" stroke="#cc3d48" stroke-width="1.05"/><path d="M12.5 8L17.5 5V13L12.5 10" stroke="#cc3d48" fill="none" stroke-width="1.05"/><path d="M1 16L17 1.5" stroke="#cc3d48" stroke-width="1.1"/></svg>
<div class="a" style="left:1619px;top:277.6px;width:25px;height:25px;background:#f0900e;border-radius:5px"></div>
<div class="a" style="left:1619.0px;top:283.1px;font-size:12.5px;line-height:16px;color:#fff;white-space:nowrap;font-weight:bold;width:25px;text-align:center;">Y</div>
<div class="a" style="left:1657.8px;top:283.7px;font-size:12.55px;line-height:16px;color:#333;white-space:nowrap;">yanshuwang</div>
<svg class="a" style="left:1855px;top:282px" width="17" height="17" viewBox="0 0 17 17"><rect x="6.5" y="1.5" width="4.5" height="8" rx="2.2" fill="none" stroke="#cc3d48" stroke-width="1.05"/><path d="M4.5 8Q4.5 12.5 8.7 12.5Q13 12.5 13 8M8.7 12.5V15M6 15.5H11.5" stroke="#cc3d48" fill="none" stroke-width="1.05"/><path d="M2 15.5L15.5 2" stroke="#cc3d48" stroke-width="1.1"/></svg>
<svg class="a" style="left:1879px;top:282px" width="19" height="17" viewBox="0 0 19 17"><rect x="1" y="4" width="11.5" height="10" rx="1" fill="none" stroke="#cc3d48" stroke-width="1.05"/><path d="M12.5 8L17.5 5V13L12.5 10" stroke="#cc3d48" fill="none" stroke-width="1.05"/><path d="M1 16L17 1.5" stroke="#cc3d48" stroke-width="1.1"/></svg>
<div class="a" style="left:1619px;top:318.6px;width:25px;height:25px;background:#c9382d;border-radius:5px"></div>
<div class="a" style="left:1619.0px;top:324.1px;font-size:12.5px;line-height:16px;color:#fff;white-space:nowrap;font-weight:bold;width:25px;text-align:center;">YF</div>
<div class="a" style="left:1657.8px;top:324.7px;font-size:12.55px;line-height:16px;color:#333;white-space:nowrap;">Yating Fu</div>
<svg class="a" style="left:1855px;top:323px" width="17" height="17" viewBox="0 0 17 17"><rect x="6.5" y="1.5" width="4.5" height="8" rx="2.2" fill="none" stroke="#cc3d48" stroke-width="1.05"/><path d="M4.5 8Q4.5 12.5 8.7 12.5Q13 12.5 13 8M8.7 12.5V15M6 15.5H11.5" stroke="#cc3d48" fill="none" stroke-width="1.05"/><path d="M2 15.5L15.5 2" stroke="#cc3d48" stroke-width="1.1"/></svg>
<svg class="a" style="left:1879px;top:323px" width="19" height="17" viewBox="0 0 19 17"><rect x="1" y="4" width="11.5" height="10" rx="1" fill="none" stroke="#cc3d48" stroke-width="1.05"/><path d="M12.5 8L17.5 5V13L12.5 10" stroke="#cc3d48" fill="none" stroke-width="1.05"/><path d="M1 16L17 1.5" stroke="#cc3d48" stroke-width="1.1"/></svg>
<div class="a" style="left:1619px;top:359.6px;width:25px;height:25px;background:#c9382d;border-radius:5px"></div>
<div class="a" style="left:1619.0px;top:365.1px;font-size:12.5px;line-height:16px;color:#fff;white-space:nowrap;font-weight:bold;width:25px;text-align:center;">YF</div>
<div class="a" style="left:1657.8px;top:365.7px;font-size:12.55px;line-height:16px;color:#333;white-space:nowrap;">Yating Fu</div>
<svg class="a" style="left:1855px;top:364px" width="17" height="17" viewBox="0 0 17 17"><rect x="6.5" y="1.5" width="4.5" height="8" rx="2.2" fill="none" stroke="#cc3d48" stroke-width="1.05"/><path d="M4.5 8Q4.5 12.5 8.7 12.5Q13 12.5 13 8M8.7 12.5V15M6 15.5H11.5" stroke="#cc3d48" fill="none" stroke-width="1.05"/><path d="M2 15.5L15.5 2" stroke="#cc3d48" stroke-width="1.1"/></svg>
<svg class="a" style="left:1879px;top:364px" width="19" height="17" viewBox="0 0 19 17"><rect x="1" y="4" width="11.5" height="10" rx="1" fill="none" stroke="#cc3d48" stroke-width="1.05"/><path d="M12.5 8L17.5 5V13L12.5 10" stroke="#cc3d48" fill="none" stroke-width="1.05"/><path d="M1 16L17 1.5" stroke="#cc3d48" stroke-width="1.1"/></svg>
<div class="a" style="left:1619px;top:400.6px;width:25px;height:25px;background:#2e83c6;border-radius:5px"></div>
<div class="a" style="left:1619.0px;top:406.1px;font-size:12.5px;line-height:16px;color:#fff;white-space:nowrap;font-weight:bold;width:25px;text-align:center;">ZT</div>
<div class="a" style="left:1657.8px;top:406.7px;font-size:12.55px;line-height:16px;color:#333;white-space:nowrap;">Zhichao Tian</div>
<svg class="a" style="left:1855px;top:405px" width="17" height="17" viewBox="0 0 17 17"><rect x="6.5" y="1.5" width="4.5" height="8" rx="2.2" fill="none" stroke="#cc3d48" stroke-width="1.05"/><path d="M4.5 8Q4.5 12.5 8.7 12.5Q13 12.5 13 8M8.7 12.5V15M6 15.5H11.5" stroke="#cc3d48" fill="none" stroke-width="1.05"/><path d="M2 15.5L15.5 2" stroke="#cc3d48" stroke-width="1.1"/></svg>
<svg class="a" style="left:1879px;top:405px" width="19" height="17" viewBox="0 0 19 17"><rect x="1" y="4" width="11.5" height="10" rx="1" fill="none" stroke="#cc3d48" stroke-width="1.05"/><path d="M12.5 8L17.5 5V13L12.5 10" stroke="#cc3d48" fill="none" stroke-width="1.05"/><path d="M1 16L17 1.5" stroke="#cc3d48" stroke-width="1.1"/></svg>
<div class="a" style="left:1619px;top:441.6px;width:25px;height:25px;background:#f0900e;border-radius:5px"></div>
<div class="a" style="left:1619.0px;top:447.1px;font-size:12.5px;line-height:16px;color:#fff;white-space:nowrap;font-weight:bold;width:25px;text-align:center;">LY</div>
<div class="a" style="left:1657.8px;top:447.7px;font-size:12.55px;line-height:16px;color:#333;white-space:nowrap;">La Yan</div>
<svg class="a" style="left:1879px;top:446px" width="19" height="17" viewBox="0 0 19 17"><rect x="1" y="4" width="11.5" height="10" rx="1" fill="none" stroke="#cc3d48" stroke-width="1.05"/><path d="M12.5 8L17.5 5V13L12.5 10" stroke="#cc3d48" fill="none" stroke-width="1.05"/><path d="M1 16L17 1.5" stroke="#cc3d48" stroke-width="1.1"/></svg>
<div class="a" style="left:1624px;top:494px;width:44px;height:22px;background:#eeeef3;border-radius:6px"></div>
<div class="a" style="left:1624.0px;top:496.8px;font-size:12px;line-height:16px;color:#333;white-space:nowrap;width:44px;text-align:center;">Invite</div>
<div class="a" style="left:1691px;top:494px;width:59px;height:22px;background:#eeeef3;border-radius:6px"></div>
<div class="a" style="left:1691.0px;top:496.8px;font-size:12px;line-height:16px;color:#333;white-space:nowrap;width:59px;text-align:center;">Mute All</div>
<div class="a" style="left:1774px;top:494px;width:74px;height:22px;background:#eeeef3;border-radius:6px"></div>
<div class="a" style="left:1774.0px;top:496.8px;font-size:12px;line-height:16px;color:#333;white-space:nowrap;width:74px;text-align:center;">Unmute All</div>
<div class="a" style="left:1872px;top:494px;width:24px;height:22px;background:#eeeef3;border-radius:6px"></div>
<div class="a" style="left:1872.0px;top:496.8px;font-size:12px;line-height:16px;color:#333;white-space:nowrap;width:24px;text-align:center;">...</div>
<div class="a" style="left:1620px;top:532px;width:289px;height:1px;background:#ebebeb;"></div>
<svg class="a" style="left:1619px;top:550px" width="10" height="7" viewBox="0 0 10 7"><path d="M1 1.5L5 5.5L9 1.5" stroke="#555" stroke-width="1.4" fill="none"/></svg>
<div class="a" style="left:1600.0px;top:546.2px;font-size:12.8px;line-height:16px;color:#39394d;white-space:nowrap;font-weight:bold;width:320px;text-align:center;">Zoom Group Chat</div>
<div class="a" style="left:1619.0px;top:583.7px;font-size:11.4px;line-height:15px;color:#707070;white-space:nowrap;"><span style="color:#707070">From </span><span style="color:#2d6fc2">Elisa Pennacchia</span><span style="color:#707070"> to </span><span style="color:#2d6fc2">Everyone:</span></div>
<div class="a" style="left:1619.0px;top:601.7px;font-size:13.9px;line-height:17px;color:#383838;white-space:nowrap;">Good morning!</div>
<div class="a" style="left:1619.0px;top:632.7px;font-size:11.4px;line-height:15px;color:#707070;white-space:nowrap;"><span style="color:#707070">From </span><span style="color:#2d6fc2">yanshuwang</span><span style="color:#707070"> to </span><span style="color:#2d6fc2">Everyone:</span></div>
<div class="a" style="left:1619.0px;top:650.7px;font-size:13.9px;line-height:17px;color:#383838;white-space:nowrap;">Good morning!</div>
<div class="a" style="left:1619.0px;top:681.4px;font-size:11.4px;line-height:15px;color:#707070;white-space:nowrap;"><span style="color:#707070">From </span><span style="color:#2d6fc2">Silvia Pennacchia</span><span style="color:#707070"> to </span><span style="color:#2d6fc2">Everyone:</span></div>
<div class="a" style="left:1619.0px;top:699.4px;font-size:13.9px;line-height:17px;color:#383838;white-space:nowrap;">Good morning!</div>
<div class="a" style="left:1619.0px;top:730.7px;font-size:11.4px;line-height:15px;color:#707070;white-space:nowrap;"><span style="color:#707070">From </span><span style="color:#2d6fc2">Yating Fu</span><span style="color:#707070"> to </span><span style="color:#2d6fc2">Everyone:</span></div>
<div class="a" style="left:1619.0px;top:748.7px;font-size:13.9px;line-height:17px;color:#383838;white-space:nowrap;">Good morning!</div>
<div class="a" style="left:1619.0px;top:798.2px;font-size:11.4px;line-height:15px;color:#707070;white-space:nowrap;"><span style="color:#707070">From </span><span style="color:#2d6fc2">Zhichao Tian</span><span style="color:#707070"> to </span><span style="color:#2d6fc2">Everyone:</span></div>
<div class="a" style="left:1619.0px;top:816.2px;font-size:13.9px;line-height:17px;color:#383838;white-space:nowrap;">For Beijing time, it is 14:58</div>
<div class="a" style="left:1619.0px;top:847.4px;font-size:11.4px;line-height:15px;color:#707070;white-space:nowrap;"><span style="color:#707070">From </span><span style="color:#2d6fc2">Adele Tiburcio</span><span style="color:#707070"> to </span><span style="color:#2d6fc2">Everyone:</span></div>
<div class="a" style="left:1619.0px;top:865.4px;font-size:13.9px;line-height:17px;color:#383838;white-space:nowrap;">good morning</div>
<div class="a" style="left:1619.0px;top:896.1px;font-size:11.4px;line-height:15px;color:#707070;white-space:nowrap;"><span style="color:#707070">From </span><span style="color:#2d6fc2">Elisa Pennacchia</span><span style="color:#707070"> to </span><span style="color:#2d6fc2">Everyone:</span></div>
<div class="a" style="left:1619.0px;top:914.1px;font-size:13.9px;line-height:17px;color:#383838;white-space:nowrap;">Good afternoon!:)</div>
<svg class="a" style="left:1783px;top:816px" width="17" height="17" viewBox="0 0 17 17"><circle cx="8.5" cy="8.5" r="7.5" fill="none" stroke="#555" stroke-width="1.1"/><path d="M4.5 7Q6 5.5 7.5 7M9.5 7Q11 5.5 12.5 7M5 10Q8.5 13.5 12 10Z" stroke="#555" stroke-width="1" fill="#aaa"/></svg>
<div class="a" style="left:1600px;top:946px;width:309px;height:1px;background:#e5e5e5;"></div>
<div class="a" style="left:1617.6px;top:961.9px;font-size:12px;line-height:16px;color:#333;white-space:nowrap;">To:</div>
<div class="a" style="left:1641px;top:959px;width:69px;height:22px;background:#efeff4;border-radius:5px"></div>
<div class="a" style="left:1648.0px;top:962.2px;font-size:11.3px;line-height:16px;color:#222;white-space:nowrap;">Xing Shi</div>
<svg class="a" style="left:1694px;top:966px" width="9" height="7" viewBox="0 0 9 7"><path d="M1 1.5L4.5 5L8 1.5" stroke="#222" stroke-width="1.4" fill="none"/></svg>
<div class="a" style="left:1716.3px;top:962.1px;font-size:11.6px;line-height:16px;color:#e05a4e;white-space:nowrap;">(Privately)</div>
<div class="a" style="left:1882px;top:959px;width:23px;height:22px;background:#fff;border:1px solid #dcdcdc;border-radius:5px"></div>
<div class="a" style="left:1882.0px;top:959.8px;font-size:12px;line-height:16px;color:#555;white-space:nowrap;width:23px;text-align:center;">...</div>
<div class="a" style="left:1617.0px;top:989.3px;font-size:12.6px;line-height:16px;color:#7a7a7a;white-space:nowrap;">Type message here...</div>
</body></html>
